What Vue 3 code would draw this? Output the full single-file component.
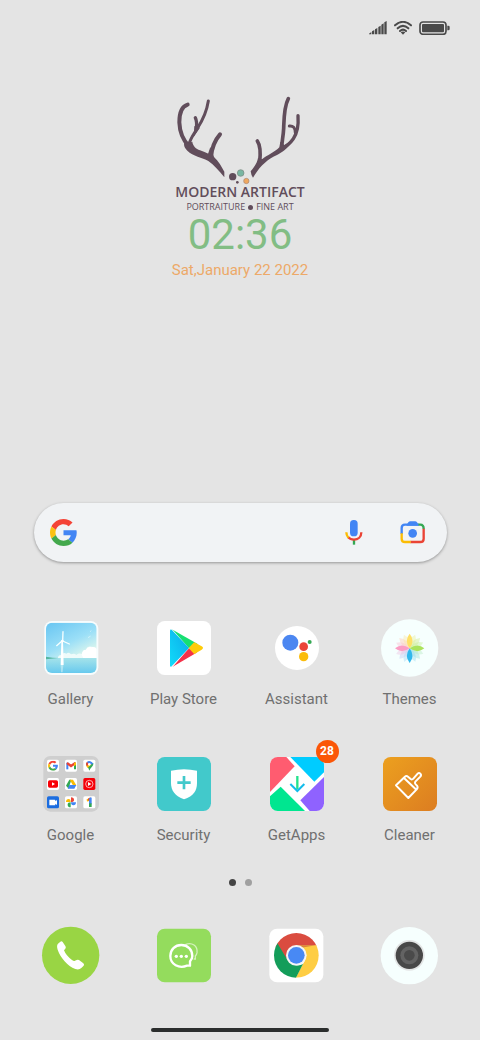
<template>
  <div class="home-screen">
    <!-- shared shapes -->
    <svg class="shared-defs" aria-hidden="true">
      <symbol id="google-g" viewBox="0 0 48 48">
        <path fill="#f44336" d="M24 9.5c3.54 0 6.71 1.22 9.21 3.6l6.85-6.85C35.9 2.38 30.47 0 24 0 14.62 0 6.51 5.38 2.56 13.22l7.98 6.19C12.43 13.72 17.74 9.5 24 9.5z" />
        <path fill="#4285f4" d="M46.98 20H24v9.02h12.94c-.58 2.96-2.26 5.48-4.78 7.18l7.73 6C44.4 38.02 47.5 31.6 47.5 24.55c0-1.57-.15-3.09-.52-4.55z" />
        <path fill="#fbc111" d="M10.53 28.59c-.48-1.45-.76-2.99-.76-4.59s.27-3.14.76-4.59l-7.98-6.19C.92 16.46 0 20.12 0 24s.92 7.54 2.56 10.78l7.97-6.19z" />
        <path fill="#43a84c" d="M24 48c6.48 0 11.93-2.13 15.89-5.81l-7.73-6c-2.15 1.45-4.92 2.3-8.16 2.3-6.26 0-11.57-4.22-13.47-9.91l-7.98 6.19C6.51 42.62 14.62 48 24 48z" />
      </symbol>
    </svg>

    <!-- status bar -->
    <header class="status-bar">
      <svg class="signal" viewBox="0 0 54 42" aria-label="Signal">
        <path fill="#4a4a4a" d="M0 38l7-5v7H0zM9 31l7-4v13H9zM18 25l7-4v19h-7zM28 18l7-4v26h-7zM37 11l7-4v33h-7zM46 4l7-4v40h-7z" />
      </svg>
      <svg class="wifi" viewBox="0 0 54 42" aria-label="Wi-Fi">
        <path fill="none" stroke="#4a4a4a" stroke-width="6" stroke-linecap="round" d="M3 13Q27-8 51 13M11 22Q27 7 43 22M18 30Q27 22 36 30" />
        <path fill="#4a4a4a" d="M20 34q7-5 14 0l-7 7z" />
      </svg>
      <svg class="battery" viewBox="0 0 93 42" aria-label="Battery">
        <rect x="3" y="3" width="78" height="37" rx="9" fill="none" stroke="#4a4a4a" stroke-width="5" />
        <rect x="9" y="9" width="66" height="25" rx="3" fill="#4a4a4a" />
        <path fill="#4a4a4a" d="M85 14h3q4 0 4 4v6q0 4-4 4h-3z" />
      </svg>
    </header>

    <!-- clock widget -->
    <section class="clock-widget">
      <svg class="antlers" viewBox="30 30 390 270" aria-hidden="true">
        <g fill="none" stroke="#614d5b" stroke-linecap="round" stroke-linejoin="round">
          <path stroke-width="12" d="M68 59C47 65 43 86 43 112C44 140 54 165 72 184" />
          <path stroke-width="9" d="M130 48C125 80 111 109 97 130C88 145 77 158 71 180" />
          <path stroke-width="10" d="M91 98C96 108 96 117 94 133" />
          <path stroke-width="12" d="M165 148C150 165 141 183 138 216" />
          <path stroke-width="11" d="M370 41C357 65 357 100 356 130C355 155 350 170 350 192" />
          <path stroke-width="10" d="M399 92C401 120 398 143 385 161C376 174 364 184 350 192" />
          <path stroke-width="9" d="M373 123C384 122 391 127 391 143" />
          <path stroke-width="11" d="M277 168C287 182 287 205 284 233" />
        </g>
        <g fill="#614d5b">
          <path d="M59 170C72 184 76 170 82 170C84 184 93 191 105 196C122 203 133 207 146 215C161 228 170 245 178 260V277C162 258 147 239 130 228C112 217 84 214 67 197C60 190 54 180 59 170z" />
          <path d="M257 259C270 243 276 234 279 219L291 223C306 211 330 201 343 187L346 170L358 180L378 168C370 192 350 202 336 210C309 223 287 239 264 278Q258 270 257 259z" />
          <path d="M128 210L136 186L148 219zM88 124L99 118L104 130L86 156z" />
          <circle cx="203" cy="275" r="11" />
          <circle cx="217" cy="292" r="4" />
        </g>
        <circle cx="227" cy="264" r="10" fill="#79b6a2" stroke="#78877e" stroke-width="2" />
        <circle cx="244" cy="288" r="8" fill="#f0a860" stroke="#a78777" stroke-width="2" />
      </svg>
      <div class="brand-name">MODERN ARTIFACT</div>
      <div class="brand-tagline">
        <span>PORTRAITURE</span>
        <i class="tagline-dot"></i>
        <span>FINE ART</span>
      </div>
      <time class="clock-time">02:36</time>
      <div class="clock-date">Sat,January 22 2022</div>
    </section>

    <!-- search bar -->
    <form class="search-bar" role="search" @submit.prevent>
      <svg class="search-logo" aria-hidden="true"><use href="#google-g" /></svg>
      <input v-model="query" class="search-input" type="text" aria-label="Search" />
      <button class="search-button" type="button" aria-label="Voice search">
        <svg viewBox="0 0 81 81">
          <rect x="30" y="3" width="23" height="49" rx="11" fill="#4285f4" />
          <g fill="none" stroke-width="7">
            <path stroke="#34a853" d="M42 62v15" />
            <path stroke="#ea4335" d="M64 40C64 54 54 62 42 62Q31 62 24 54" />
            <path stroke="#fbbc04" d="M19 40Q19 49 25 56" />
          </g>
        </svg>
      </button>
      <button class="search-button" type="button" aria-label="Search with camera">
        <svg viewBox="0 0 81 81">
          <g fill="none" stroke-width="7">
            <path stroke="#4285f4" d="M8 45V27Q8 17 18 17H58" />
            <path stroke="#34a853" d="M57 17H64Q74 17 74 30" />
            <path stroke="#ea4335" d="M74 29V59Q74 69 64 69H34" />
            <path stroke="#fbbc04" d="M8 43V59Q8 69 18 69H35" />
          </g>
          <path fill="#4285f4" d="M23 17l5-7q2-3 6-3h14q4 0 6 3l5 7v3H23z" />
          <circle cx="41" cy="43" r="13" fill="#4285f4" />
        </svg>
      </button>
    </form>

    <!-- app grid -->
    <main class="app-grid">
      <button class="app" type="button">
        <svg class="app-icon" viewBox="33 24 177 177" aria-hidden="true">
          <defs>
            <linearGradient id="sky" x1="0" y1="0" x2=".5" y2="1">
              <stop offset="0" stop-color="#67c5f2" />
              <stop offset=".5" stop-color="#9bdff7" />
              <stop offset=".8" stop-color="#d9f5ee" />
            </linearGradient>
            <linearGradient id="sea" x1="0" y1="0" x2="0" y2="1">
              <stop offset="0" stop-color="#a5e3ea" />
              <stop offset="1" stop-color="#65c8ee" />
            </linearGradient>
            <clipPath id="gallery-clip"><rect x="48" y="38" width="152" height="151" rx="18" /></clipPath>
          </defs>
          <rect x="43" y="33" width="162" height="162" rx="23" fill="#f7fcfd" />
          <g clip-path="url(#gallery-clip)">
            <rect x="48" y="38" width="152" height="151" fill="url(#sky)" />
            <path fill="#effbfa" d="M84 144q0-9 10-9 6-9 15-4 8-6 14 2 10-5 16 2 8-7 17-3 2-14 12-13 4-11 16-9 12 1 17 5v31z" />
            <path fill="#fff" d="M155 134q2-15 12-14 6-11 17-8 10-3 17 6v26h-41z" />
            <rect x="48" y="144" width="152" height="47" fill="url(#sea)" />
            <path fill="#54b6a0" d="M48 140l20 3 17 1-37 4z" />
            <path fill="#dcf6f8" opacity=".5" d="M92 165h8l-2 22h-5z" />
            <path fill="#fff" d="M94 94h5l2 71h-9z" />
            <path fill="none" stroke="#f7ffff" stroke-width="4" stroke-linecap="round" d="M98 93l1-28M96 93l-16 14M98 93l20 9" />
            <circle cx="97" cy="93" r="4" fill="#fff" />
            <path stroke="#dff8fc" stroke-width="2" d="M174 83l8-5M180 65l4-3" />
          </g>
        </svg>
        <span class="app-label">Gallery</span>
      </button>

      <button class="app" type="button">
        <svg class="app-icon" viewBox="372 24 177 177" aria-hidden="true">
          <defs>
            <linearGradient id="play-blue" x1="1" y1="0" x2="0" y2="1">
              <stop offset="0" stop-color="#0aa8e8" />
              <stop offset="1" stop-color="#12dcfa" />
            </linearGradient>
            <clipPath id="play-clip"><path d="M420 63Q420 55 428 59L515 109Q523 114 515 119L428 170Q420 174 420 166z" /></clipPath>
          </defs>
          <rect x="381" y="33" width="162" height="162" rx="23" fill="#fff" />
          <g clip-path="url(#play-clip)">
            <path fill="#16df72" d="M420 50L505 100L477 115z" />
            <path fill="#f4324a" d="M420 180L505 130L477 115z" />
            <path fill="url(#play-blue)" d="M420 54L477 114L420 174z" />
            <path fill="#ffcc08" d="M493 96L530 114L493 133L476 114z" />
          </g>
        </svg>
        <span class="app-label">Play Store</span>
      </button>

      <button class="app" type="button">
        <svg class="app-icon" viewBox="36 24 177 177" aria-hidden="true">
          <circle cx="126" cy="114" r="66" fill="#fff" />
          <circle cx="106" cy="98" r="24" fill="#4c87f1" />
          <circle cx="146" cy="110" r="13" fill="#ea4537" />
          <circle cx="146" cy="140" r="14" fill="#fbbc0b" />
          <circle cx="164" cy="96" r="6" fill="#34a853" />
        </svg>
        <span class="app-label">Assistant</span>
      </button>

      <button class="app" type="button">
        <svg class="app-icon" viewBox="375 24 177 177" aria-hidden="true">
          <circle cx="464" cy="114" r="86" fill="#f6fffe" />
          <path
            v-for="petal in petals"
            :key="petal.angle"
            :fill="petal.color"
            :opacity="petal.opacity"
            :transform="`rotate(${petal.angle} 464 115)`"
            d="M464 115Q447 91 464 71Q481 91 464 115z"
          />
        </svg>
        <span class="app-label">Themes</span>
      </button>

      <button class="app" type="button">
        <svg class="app-icon" viewBox="33 42 177 177" aria-hidden="true">
          <rect x="40" y="48" width="167" height="167" rx="21" fill="#cfcfcf" />
          <g fill="#fff">
            <rect x="51" y="59" width="36" height="36" rx="5" />
            <rect x="105" y="59" width="36" height="36" rx="5" />
            <rect x="160" y="59" width="36" height="36" rx="5" />
            <rect x="51" y="114" width="36" height="36" rx="5" />
            <rect x="105" y="114" width="36" height="36" rx="5" />
            <rect x="105" y="169" width="36" height="36" rx="5" />
            <rect x="160" y="169" width="36" height="36" rx="5" />
          </g>
          <use href="#google-g" x="54" y="62" width="30" height="30" />
          <!-- mail -->
          <path fill="#4285f4" d="M109 68h6v20h-6z" />
          <path fill="#34a853" d="M132 68h6v20h-6z" />
          <path fill="none" stroke="#ea4335" stroke-width="7" d="M111 69L123 78L136 69" />
          <path fill="#fbbc04" d="M132 70l6-4v9l-6 4z" />
          <!-- maps -->
          <path fill="#34a853" d="M178 92q-2-8-7-13-5-6-2-11l21 1q1 6-4 11-6 6-8 12z" />
          <path fill="#fbbc04" d="M169 78l10-12 7 5-13 13z" />
          <path fill="#ea4335" d="M168 72q0-4 4-7l7 6-9 8z" />
          <path fill="#4285f4" d="M171 66q4-4 10-2 7 2 8 8l-10 2z" />
          <circle cx="178" cy="73" r="4" fill="#fff" />
          <!-- video -->
          <rect x="54" y="121" width="30" height="22" rx="5" fill="#f80006" />
          <path fill="#fff" d="M66 127l9 5-9 5z" />
          <!-- drive -->
          <path fill="#34a853" d="M118 119h6l-8 27-8-9z" />
          <path fill="#fbbc04" d="M119 119h10l10 17h-11z" />
          <path fill="#4285f4" d="M118 135h21l-6 11h-20z" />
          <path fill="#fff" d="M123 127l5 8h-9z" />
          <!-- music -->
          <rect x="160" y="114" width="36" height="36" rx="5" fill="#f50008" />
          <circle cx="178" cy="132" r="11" fill="none" stroke="#fff" stroke-width="2" />
          <path fill="#fff" d="M174 126l10 6-10 6z" />
          <!-- meet -->
          <rect x="51" y="169" width="36" height="36" rx="5" fill="#1b6de0" />
          <path fill="#fff" d="M58 179h16q2 0 2 2v3l5-4v15l-5-4v3q0 2-2 2H60q-2 0-2-2z" />
          <!-- photos -->
          <path fill="#fbbc04" d="M122 186h-14q0-9 8-9 6 0 6 9z" />
          <path fill="#ea4335" d="M123 186v-14q9 0 9 8 0 6-9 6z" />
          <path fill="#4285f4" d="M123 187h15q0 9-8 9-7 0-7-9z" />
          <path fill="#34a853" d="M122 187v15q-9 0-9-8 0-7 9-7z" />
          <!-- one -->
          <path stroke="#fbbc04" stroke-width="7" d="M171 182l9-6" />
          <path fill="#ea4335" d="M173 177l8-5v8l-5 3z" />
          <path fill="#4285f4" d="M177 176l5-4q3 0 3 3v18h-8z" />
          <path fill="#34a853" d="M177 190h8v11h-8z" />
        </svg>
        <span class="app-label">Google</span>
      </button>

      <button class="app" type="button">
        <svg class="app-icon" viewBox="27 42 177 177" aria-hidden="true">
          <rect x="36" y="51" width="162" height="162" rx="23" fill="#42c9cb" />
          <path fill="#fff" d="M78 92Q117 83 156 92V128C156 153 146 167 117 178C90 167 78 153 78 128z" />
          <path stroke="#42c9cb" stroke-width="8" d="M117 108v40M97 128h40" />
        </svg>
        <span class="app-label">Security</span>
      </button>

      <button class="app" type="button">
        <svg class="app-icon" viewBox="366 42 177 177" aria-hidden="true">
          <defs>
            <clipPath id="getapps-clip"><rect x="375" y="51" width="162" height="162" rx="23" /></clipPath>
          </defs>
          <g clip-path="url(#getapps-clip)">
            <path fill="#fff" d="M375 51h162v162H375z" />
            <path fill="#ff5c70" d="M375 51H424L449 79L375 156z" />
            <path fill="#00ccff" d="M436 51H537V97L508 125z" />
            <path fill="#8f62ff" d="M537 111V213H494L466 181z" />
            <path fill="#00e690" d="M375 169L407 140L480 213H375z" />
          </g>
          <path stroke="#25e28c" stroke-width="7" d="M457 108v40" />
          <path fill="none" stroke="#13bceb" stroke-width="6" d="M436 132l21 21 21-21" />
        </svg>
        <span class="badge">28</span>
        <span class="app-label">GetApps</span>
      </button>

      <button class="app" type="button">
        <svg class="app-icon" viewBox="90 42 177 177" aria-hidden="true">
          <defs>
            <linearGradient id="cleaner-orange" x1="0" y1="0" x2="1" y2="1">
              <stop offset="0" stop-color="#eca01f" />
              <stop offset="1" stop-color="#dc7d21" />
            </linearGradient>
          </defs>
          <rect x="99" y="51" width="162" height="162" rx="23" fill="url(#cleaner-orange)" />
          <path
            fill="none"
            stroke="#fff"
            stroke-width="6"
            stroke-linejoin="round"
            d="M138 136L164 111Q169 106 174 110L182 117Q186 120 190 116L203 101Q207 97 211 101Q215 105 211 110L196 125Q193 129 197 133L201 137Q205 142 200 148L175 174zM162 114L199 149"
          />
        </svg>
        <span class="app-label">Cleaner</span>
      </button>
    </main>

    <!-- page indicator -->
    <div class="page-dots">
      <span
        v-for="page in pageCount"
        :key="page"
        class="page-dot"
        :class="{ 'page-dot-active': page === currentPage }"
      ></span>
    </div>

    <!-- dock -->
    <nav class="dock">
      <button class="app" type="button" aria-label="Phone">
        <svg class="app-icon" viewBox="33 168 177 177">
          <circle cx="122" cy="256" r="86" fill="#99d544" />
          <path fill="#fff" d="M84 221L91 215Q95 212 98 216L106 228Q109 232 106 236L102 241Q108 257 126 270Q132 274 135 272L140 270Q143 268 147 270L160 280Q164 284 161 287L154 294Q147 301 136 297C113 288 91 263 83 239Q79 226 84 221z" />
        </svg>
      </button>
      <button class="app" type="button" aria-label="Messages">
        <svg class="app-icon" viewBox="372 168 177 177">
          <rect x="381" y="176" width="162" height="161" rx="23" fill="#94dc5d" />
          <path fill="none" stroke="#d5f1bd" stroke-width="4" d="M466 224Q480 217 492 225Q503 233 501 248Q500 254 496 258V267H491" />
          <path fill="none" stroke="#fff" stroke-width="7" stroke-linejoin="round" d="M480 287H471C447 297 421 283 421 258C421 239 435 225 454 225C473 225 487 239 487 258Q487 267 480 274z" />
          <g fill="#fff">
            <circle cx="439" cy="259" r="5" />
            <circle cx="454" cy="259" r="5" />
            <circle cx="469" cy="259" r="5" />
          </g>
        </svg>
      </button>
      <button class="app" type="button" aria-label="Chrome">
        <svg class="app-icon" viewBox="51 33 177 177">
          <defs>
            <clipPath id="chrome-clip"><circle cx="139" cy="121" r="67" /></clipPath>
          </defs>
          <rect x="58" y="41" width="162" height="161" rx="23" fill="#fff" />
          <g clip-path="url(#chrome-clip)">
            <path fill="#da4c40" d="M72 54h135v38H139L113 136L72 92z" />
            <path fill="#fecd43" d="M139 91H207V188H137L165 136z" />
            <path fill="#149d5a" d="M70 65L84 88L113 136Q135 158 159 147L137 190H70z" />
            <path fill="#b83e32" opacity=".5" d="M139 91h58l-43 7z" />
          </g>
          <circle cx="139" cy="121" r="31" fill="#f5f5f5" />
          <circle cx="139" cy="121" r="25" fill="#4889f4" />
        </svg>
      </button>
      <button class="app" type="button" aria-label="Camera">
        <svg class="app-icon" viewBox="390 33 177 177">
          <circle cx="478" cy="122" r="86" fill="#f6fffe" />
          <circle cx="478" cy="121" r="46" fill="#e3e5e5" />
          <circle cx="478" cy="121" r="41" fill="#484848" />
          <circle cx="478" cy="121" r="27" fill="#636363" />
          <circle cx="478" cy="121" r="16" fill="#4a4a4a" />
        </svg>
      </button>
    </nav>

    <div class="home-indicator"></div>
  </div>
</template>

<script setup>
import { ref } from 'vue';

const query = ref('');
const pageCount = 2;
const currentPage = ref(1);

// pale petals first, the four bright ones are drawn on top
const petals = [
  { angle: 22, color: '#e9ee8f', opacity: 0.4 },
  { angle: 45, color: '#d5ee9b', opacity: 0.5 },
  { angle: 67, color: '#c4ed91', opacity: 0.4 },
  { angle: 112, color: '#b5e8c0', opacity: 0.4 },
  { angle: 135, color: '#a5e3e0', opacity: 0.5 },
  { angle: 157, color: '#8fd8ef', opacity: 0.4 },
  { angle: 202, color: '#9fd5f4', opacity: 0.4 },
  { angle: 225, color: '#c5d2f3', opacity: 0.5 },
  { angle: 247, color: '#edbfe2', opacity: 0.4 },
  { angle: 292, color: '#fbb9cc', opacity: 0.4 },
  { angle: 315, color: '#fdcfb9', opacity: 0.5 },
  { angle: 337, color: '#fde39d', opacity: 0.4 },
  { angle: 0, color: '#fee066', opacity: 1 },
  { angle: 90, color: '#abe35c', opacity: 1 },
  { angle: 180, color: '#31b8ec', opacity: 1 },
  { angle: 270, color: '#fb9dc4', opacity: 1 },
];
</script>

<style>
body {
  margin: 0;
  background-color: #e4e4e4;
}
</style>

<style scoped>
.home-screen {
  display: flex;
  flex-direction: column;
  box-sizing: border-box;
  min-height: 100vh;
  padding-bottom: 8px;
  background-color: #e4e4e4;
  font-family: Roboto, "Liberation Sans", sans-serif;
}

.shared-defs {
  position: absolute;
  width: 0;
  height: 0;
}

button {
  padding: 0;
  border: 0;
  background: none;
  font: inherit;
  cursor: pointer;
}

/* status bar */
.status-bar {
  display: flex;
  justify-content: flex-end;
  align-items: center;
  gap: 7px;
  height: 55px;
  padding-right: 30px;
}

.signal,
.wifi {
  width: 18px;
  height: 14px;
}

.battery {
  width: 31px;
  height: 14px;
}

/* clock widget */
.clock-widget {
  display: flex;
  flex-direction: column;
  align-items: center;
  padding-top: 40px;
}

.antlers {
  width: 130px;
  height: 90px;
}

.brand-name {
  color: #614d5b;
  font-family: "Open Sans", "Noto Sans", sans-serif;
  font-size: 14px;
  font-weight: 600;
  line-height: 14px;
}

.brand-tagline {
  display: flex;
  align-items: center;
  gap: 3px;
  color: #614d5b;
  font-family: "Open Sans", "Noto Sans", sans-serif;
  font-size: 9px;
  line-height: 16px;
}

.tagline-dot {
  width: 5px;
  height: 5px;
  border-radius: 50%;
  background-color: #614d5b;
}

.clock-time {
  color: #82bd84;
  font-size: 42px;
  line-height: 40px;
}

.clock-date {
  margin-top: 5px;
  color: #eda968;
  font-size: 15px;
  line-height: 20px;
}

/* search bar */
.search-bar {
  display: flex;
  align-items: center;
  gap: 32px;
  height: 59px;
  margin: 223px 33px 0 34px;
  padding: 0 21px 0 16px;
  box-sizing: border-box;
  border-radius: 30px;
  background-color: #f1f3f5;
  box-shadow: 0 1px 3px rgba(0, 0, 0, 0.35);
}

.search-logo {
  flex: none;
  width: 27px;
  height: 27px;
}

.search-input {
  flex: 1;
  min-width: 0;
  padding: 0;
  border: 0;
  outline: 0;
  background: none;
  font: inherit;
}

.search-button {
  width: 27px;
  height: 27px;
}

.search-button svg {
  display: block;
}

/* apps */
.app-grid,
.dock {
  display: grid;
  grid-template-columns: repeat(4, 1fr);
  row-gap: 45px;
  padding: 0 14px;
}

.app-grid {
  margin-top: 56px;
}

.app {
  position: relative;
  display: flex;
  flex-direction: column;
  align-items: center;
  gap: 12px;
}

.app-icon {
  width: 59px;
  height: 59px;
}

.app-label {
  color: #707070;
  font-size: 15px;
  line-height: 20px;
}

.badge {
  position: absolute;
  top: -14px;
  left: calc(50% + 19px);
  width: 23px;
  border-radius: 50%;
  background-color: #fb5607;
  color: #fff;
  font-size: 12px;
  font-weight: 700;
  line-height: 23px;
  text-align: center;
}

/* page indicator */
.page-dots {
  display: flex;
  justify-content: center;
  gap: 9px;
  margin-top: 34px;
}

.page-dot {
  width: 7px;
  height: 7px;
  border-radius: 50%;
  background-color: #a0a0a0;
}

.page-dot-active {
  background-color: #444;
}

.dock {
  margin-top: 40px;
}

.home-indicator {
  width: 37%;
  height: 4px;
  margin: auto auto 0;
  border-radius: 2px;
  background-color: #2b2e2d;
}
</style>
